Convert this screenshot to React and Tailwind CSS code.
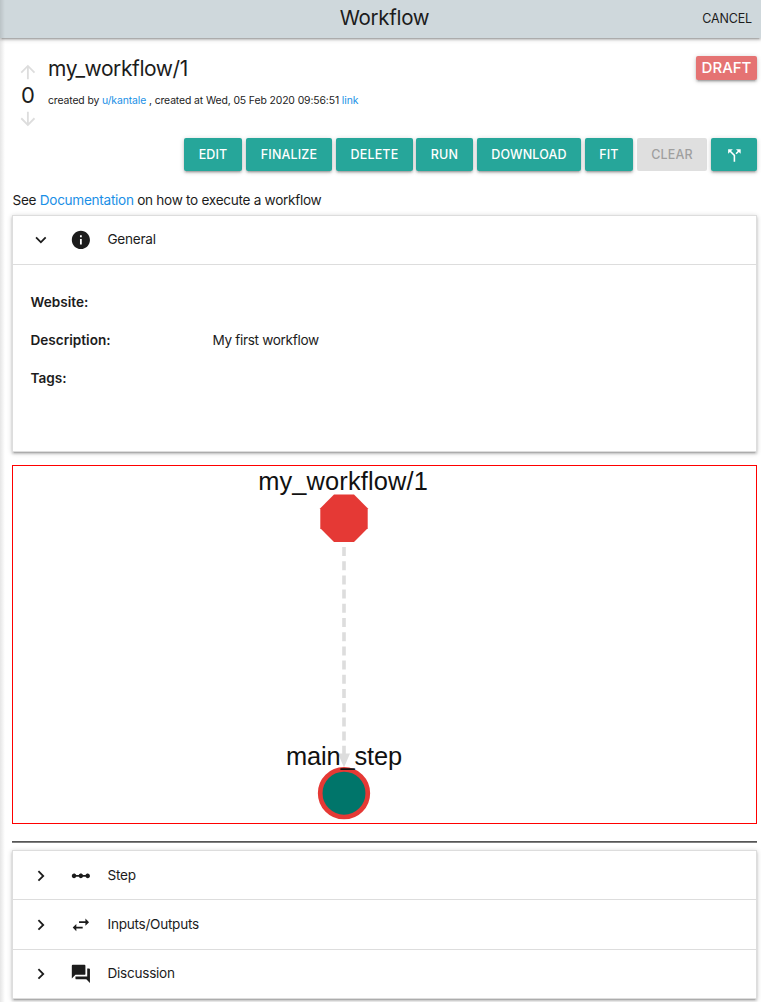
const icons = {
  up: 'M4 12l1.41 1.41L11 7.83V20h2V7.83l5.58 5.59L20 12l-8-8-8 8z',
  down: 'M20 12l-1.41-1.41L13 16.17V4h-2v12.17l-5.58-5.59L4 12l8 8 8-8z',
  split: 'M14 4l2.29 2.29-2.88 2.88 1.42 1.42 2.88-2.88L20 10V4zm-4 0H4v6l2.29-2.29 4.71 4.7V20h2v-8.41l-5.29-5.3z',
  right: 'M10 6L8.59 7.41 13.17 12l-4.58 4.59L10 18l6-6z',
  expand: 'M16.59 8.59L12 13.17 7.41 8.59 6 10l6 6 6-6z',
  info: 'M12 2C6.48 2 2 6.48 2 12s4.48 10 10 10 10-4.48 10-10S17.52 2 12 2zm1 15h-2v-6h2v6zm0-8h-2V7h2v2z',
  scale: 'M19.5 9.5c-1.03 0-1.9.62-2.29 1.5h-2.92c-.39-.88-1.26-1.5-2.29-1.5s-1.9.62-2.29 1.5H6.79c-.39-.88-1.26-1.5-2.29-1.5C3.12 9.5 2 10.62 2 12s1.12 2.5 2.5 2.5c1.03 0 1.9-.62 2.29-1.5h2.92c.39.88 1.26 1.5 2.29 1.5s1.9-.62 2.29-1.5h2.92c.39.88 1.26 1.5 2.29 1.5 1.38 0 2.5-1.12 2.5-2.5s-1.12-2.5-2.5-2.5z',
  swap: 'M6.99 11L3 15l3.99 4v-3H14v-2H6.99v-3zM21 9l-3.99-4v3H10v2h7.01v3L21 9z',
  chat: 'M21 6h-2v9H6v2c0 .55.45 1 1 1h11l4 4V7c0-.55-.45-1-1-1zm-4 6V3c0-.55-.45-1-1-1H3c-.55 0-1 .45-1 1v14l4-4h10c.55 0 1-.45 1-1z',
};

function Icon({ name, className = 'size-[21.75px]' }) {
  return (
    <svg viewBox="0 0 24 24" fill="currentColor" className={'shrink-0 ' + className}>
      <path d={icons[name]} />
    </svg>
  );
}

const buttons = [
  ['EDIT', 'w-[58px]'],
  ['FINALIZE', 'ml-1 w-[86px]'],
  ['DELETE', 'ml-1 w-[77px]'],
  ['RUN', 'ml-[3px] w-[57px]'],
  ['DOWNLOAD', 'ml-1 w-[104px]'],
  ['FIT', 'ml-1 w-12'],
];

const btn =
  'flex h-[33px] shrink-0 items-center justify-center rounded-[2px] text-[12.5px] font-medium tracking-[0.15px]';
const depth =
  'shadow-[0_2px_2px_0_rgba(0,0,0,0.14),0_3px_1px_-2px_rgba(0,0,0,0.12),0_1px_5px_0_rgba(0,0,0,0.2)]';

function SectionHeader({ open, icon, title, className = '' }) {
  return (
    <button className={'flex w-full items-center border-[#ddd] pl-[16.5px] text-left ' + className}>
      <Icon name={open ? 'expand' : 'right'} />
      <Icon name={icon} className="ml-[18.5px] size-[21.75px]" />
      <span className="ml-4 -translate-y-px text-[13.6px] tracking-[-0.27px]">{title}</span>
    </button>
  );
}

function Field({ label, children }) {
  return (
    <div className="flex h-[38px] items-center text-[13.6px]">
      <span className="w-[182px] font-semibold">{label}</span>
      <span className="tracking-[-0.33px]">{children}</span>
    </div>
  );
}

function Graph() {
  return (
    <svg viewBox="13 466 743 357" className="block h-full w-full">
      <line x1="344" y1="547" x2="344" y2="757" stroke="#ddd" strokeWidth="3.6" strokeDasharray="9 5.2" />
      <path d="M338 753.5h12l-6 14z" fill="#ddd" />
      <polygon points="334,494.5 354,494.5 367.7,508.3 367.7,528.3 354,542 334,542 320.3,528.3 320.3,508.3" fill="#e53935" />
      <circle cx="344" cy="793.2" r="23.8" fill="#00756a" stroke="#e53935" strokeWidth="4.7" />
      <g fontFamily="Liberation Sans, Arial, sans-serif" fontSize="25.4" fill="#111" textAnchor="middle">
        <text x="343" y="490" textLength="169.5">my_workflow/1</text>
        <text x="344" y="765" textLength="116">main_step</text>
      </g>
    </svg>
  );
}

export default function App() {
  return (
    <div className="relative h-[1002px] w-[761px] overflow-hidden bg-white font-[Inter,sans-serif] text-[#1c1c1c]">
      <header className={'grid h-[38px] grid-cols-[1fr_auto_1fr] items-center bg-[#cfd8dc] pr-[9px] ' + depth}>
        <span />
        <h1 className="-translate-y-px pl-[17px] text-[20.5px] tracking-[-0.3px]">Workflow</h1>
        <a className="justify-self-end text-[12.5px] tracking-[-0.15px]">CANCEL</a>
      </header>

      <main className="pr-1 pl-3">
        <section className="flex h-[100px] pt-[18px]">
          <div className="flex w-8 flex-col items-center pt-[5px]">
            <Icon name="up" className="size-[21.75px] text-[#ddd]" />
            <span className="flex h-[25px] items-center text-[22px]">0</span>
            <Icon name="down" className="size-[21.75px] text-[#ddd]" />
          </div>
          <div className="ml-1 flex-1">
            <h2 className="h-[26px] text-[21px] leading-[26px] tracking-[-0.42px]">my_workflow/1</h2>
            <p className="mt-[11px] text-[10.4px] leading-[15px] tracking-[-0.11px]">
              created by <a className="text-[#1a8fe6]">u/kantale</a> , created at Wed, 05 Feb 2020 09:56:51{' '}
              <a className="text-[#1a8fe6]">link</a>
            </p>
          </div>
          <div className={'flex h-6 w-[61px] items-center justify-center rounded-[2px] bg-[#e57373] text-[15px] font-medium text-white ' + depth}>
            DRAFT
          </div>
        </section>

        <div className="flex justify-end">
          {buttons.map(([label, size]) => (
            <button key={label} className={btn + ' bg-[#26a69a] pt-0.5 text-white ' + depth + ' ' + size}>
              {label}
            </button>
          ))}
          <button className={btn + ' ml-1 w-[70px] bg-[#dfdfdf] pt-0.5 text-[#9f9f9f]'}>CLEAR</button>
          <button className={btn + ' ml-1 w-[46px] bg-[#26a69a] text-white ' + depth}>
            <Icon name="split" className="size-[18.8px] translate-y-px" />
          </button>
        </div>

        <p className="mt-5 h-6 pl-[0.5px] text-[13.6px] leading-[19px] tracking-[-0.29px]">
          See <a className="text-[#1a8fe6]">Documentation</a> on how to execute a workflow
        </p>

        <section className={'h-[237px] border border-[#ddd] ' + depth}>
          <SectionHeader open icon="info" title="General" className="h-[49px] border-b" />
          <div className="pt-[18px] pl-[17.5px]">
            <Field label="Website:" />
            <Field label="Description:">My first workflow</Field>
            <Field label="Tags:" />
          </div>
        </section>

        <section className="mt-[13px] h-[359px] border border-[#f00]">
          <Graph />
        </section>

        <hr className="mt-[17px] h-0.5 border-t border-b border-t-[#555] border-b-[#808080]" />

        <section className={'mt-[7px] h-[149px] border border-[#ddd] ' + depth}>
          <SectionHeader icon="scale" title="Step" className="h-[49px] border-b pt-0.5" />
          <SectionHeader icon="swap" title="Inputs/Outputs" className="h-[50px] border-b pt-px" />
          <SectionHeader icon="chat" title="Discussion" className="h-12" />
        </section>
      </main>
      <div className="pointer-events-none absolute inset-y-0 left-0 w-[5px] bg-linear-to-r from-black/10 to-transparent" />
    </div>
  );
}
